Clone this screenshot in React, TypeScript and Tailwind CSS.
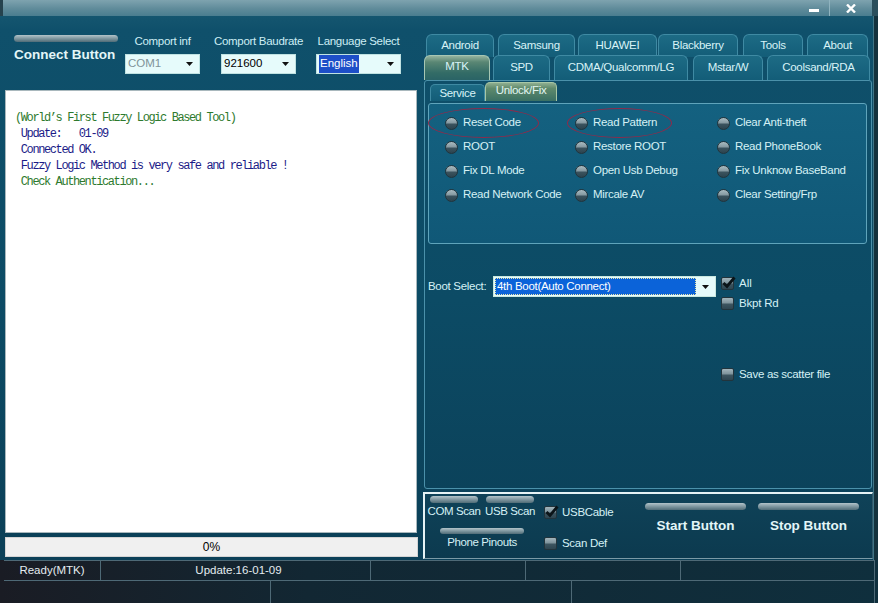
import React from 'react';

const sans = "font-['Liberation_Sans',Arial,sans-serif]";

function Pill({ className }: { className: string }) {
  return (
    <div
      className={`rounded-full bg-[linear-gradient(180deg,#b3c4ca_0%,#7f97a0_50%,#506c77_100%)] ${className}`}
    />
  );
}

function Arrow() {
  return (
    <svg width="7" height="4" viewBox="0 0 7 4">
      <path d="M0 0h7L3.5 4z" fill="#111" />
    </svg>
  );
}

function Radio() {
  return (
    <span className="inline-block w-[13px] h-[13px] shrink-0 rounded-full border border-[#22343c] bg-[linear-gradient(180deg,#a9bbc1_0%,#8599a1_45%,#3b535e_55%,#2c444f_100%)]" />
  );
}

function Check({ checked }: { checked?: boolean }) {
  return (
    <span className="relative inline-block w-[13px] h-[13px] shrink-0 rounded-[2px] border border-[#22343c] bg-[linear-gradient(180deg,#a3b5bc_0%,#7e939b_45%,#3d5560_55%,#2e4651_100%)]">
      {checked && (
        <svg className="absolute left-[0px] -top-[2px]" width="14" height="14" viewBox="0 0 14 14">
          <path d="M1.5 7 L5 10.5 L12.5 1.5" stroke="#0b1418" strokeWidth="2.8" fill="none" />
        </svg>
      )}
    </span>
  );
}

function TitleBar() {
  return (
    <div className="h-[16px] flex bg-[linear-gradient(180deg,#7ea3af_0%,#5f8b9a_55%,#4a7d8f_100%)]">
      <div className="w-[3px] bg-[#26434e]" />
      <div className="flex-1" />
      <div className="w-[30px] flex items-center justify-center">
        <div className="w-[10px] h-[3px] bg-white mt-[5px]" />
      </div>
      <div className="w-[1px] bg-[#8fb3bf]" />
      <div className="w-[42px] flex items-center justify-center">
        <svg width="10" height="9" viewBox="0 0 10 9">
          <path d="M1 0.5 L9 8.5 M9 0.5 L1 8.5" stroke="#fff" strokeWidth="2.4" />
        </svg>
      </div>
      <div className="w-[6px] bg-[#2b4f5c]" />
    </div>
  );
}

function ComboGroup({
  label,
  className,
  children,
}: {
  label: string;
  className: string;
  children: React.ReactNode;
}) {
  return (
    <div className={`flex flex-col items-center pt-[18px] ${className}`}>
      <div className="h-[14px] leading-[14px] text-[11.5px] tracking-[-0.3px] text-[#cdeef4] whitespace-nowrap">
        {label}
      </div>
      <div className="mt-[6px] w-full h-[20px] bg-[#e6fbfb] border border-[#bfe2e2] flex items-center pl-[2px] pr-[6px] text-[11.5px]">
        <div className="flex-1 flex">{children}</div>
        <Arrow />
      </div>
    </div>
  );
}

function LeftPanel() {
  return (
    <div className="w-[420px] flex flex-col">
      <div className="h-[74px] flex items-start">
        <div className="ml-[14px] w-[104px] flex flex-col items-start">
          <Pill className="mt-[19px] w-[104px] h-[7px]" />
          <div className="mt-[5px] h-[16px] leading-[16px] text-[13.5px] font-bold text-[#e3f6f8] whitespace-nowrap">
            Connect Button
          </div>
        </div>
        <ComboGroup label="Comport inf" className="ml-[7px] w-[75px]">
          <span className="text-[#7f9399]">COM1</span>
        </ComboGroup>
        <ComboGroup label="Comport Baudrate" className="ml-[21px] w-[75px]">
          <span className="text-black">921600</span>
        </ComboGroup>
        <ComboGroup label="Language Select" className="ml-[20px] w-[85px]">
          <span className="bg-[#1d4fc8] text-white px-[1px]">English</span>
        </ComboGroup>
      </div>
      <div className="ml-[5px] w-[412px] h-[443px] bg-white border border-[#a9b8bd] pt-[19px] pl-[9px] font-['Liberation_Mono',monospace] text-[12px] tracking-[-1.4px] leading-[16px] whitespace-pre">
        <div className="text-[#2e7a2e]">(World’s First Fuzzy Logic Based Tool)</div>
        <div className="text-[#1c1c88]"> Update:   01-09</div>
        <div className="text-[#1c1c88]"> Connected OK.</div>
        <div className="text-[#1c1c88]"> Fuzzy Logic Method is very safe and reliable !</div>
        <div className="text-[#2e7a2e]"> Check Authentication...</div>
      </div>
      <div className="ml-[5px] mt-[4px] w-[413px] h-[20px] bg-[#f0f0f0] border border-[#d4d4d4] flex items-center justify-center text-[12px] text-black">
        0%
      </div>
    </div>
  );
}

const row1 = [
  { label: 'Android', cls: 'ml-[6px] w-[68px]' },
  { label: 'Samsung', cls: 'ml-[4px] w-[77px]' },
  { label: 'HUAWEI', cls: 'ml-[3px] w-[79px]' },
  { label: 'Blackberry', cls: 'ml-[1px] w-[80px]' },
  { label: 'Tools', cls: 'ml-[5px] w-[60px]' },
  { label: 'About', cls: 'ml-[4px] w-[61px]' },
];

const row2 = [
  { label: 'MTK', cls: 'ml-[4px] w-[66px]', active: true },
  { label: 'SPD', cls: 'ml-[3px] w-[57px]' },
  { label: 'CDMA/Qualcomm/LG', cls: 'ml-[4px] w-[134px]' },
  { label: 'Mstar/W', cls: 'ml-[5px] w-[70px]' },
  { label: 'Coolsand/RDA', cls: 'ml-[4px] w-[103px]' },
];

function Tab({ label, cls, active }: { label: string; cls: string; active?: boolean }) {
  const base =
    'h-full rounded-t-[6px] border border-b-0 flex items-center justify-center text-[11.5px] tracking-[-0.3px] text-[#d8f3f7] whitespace-nowrap';
  const look = active
    ? 'border-[#a7c7b4] bg-[linear-gradient(180deg,#93b39f_0%,#5a8774_25%,#336c66_70%,#2a6366_100%)] pb-[3px]'
    : 'border-[#3f8aa3] bg-[linear-gradient(180deg,#1d6b85_0%,#135d78_100%)]';
  return <div className={`${base} ${look} ${cls}`}>{label}</div>;
}

const radios = [
  ['Reset Code', 'Read Pattern', 'Clear Anti-theft'],
  ['ROOT', 'Restore ROOT', 'Read PhoneBook'],
  ['Fix DL Mode', 'Open Usb Debug', 'Fix Unknow BaseBand'],
  ['Read Network Code', 'Mircale AV', 'Clear Setting/Frp'],
];

function RadioItem({ label, cls }: { label: string; cls: string }) {
  return (
    <div className={`h-[24px] flex items-center gap-[5px] ${cls}`}>
      <Radio />
      <span className="text-[11.5px] tracking-[-0.3px] text-[#d5f1f5] whitespace-nowrap">{label}</span>
    </div>
  );
}

function TabBody() {
  return (
    <div className="ml-[4px] w-[448px] h-[409px] border border-[#4b91aa] rounded-[3px] flex flex-col">
      <div className="h-[20px] flex items-end pl-[5px]">
        <div className="w-[55px] h-[17px] rounded-t-[5px] border border-b-0 border-[#3f8aa3] bg-[linear-gradient(180deg,#1d6b85_0%,#135d78_100%)] flex items-center justify-center text-[11.5px] tracking-[-0.3px] text-[#d8f3f7] pt-[2px]">
          Service
        </div>
        <div className="w-[72px] h-[19px] rounded-t-[5px] border border-b-0 border-[#a7c7a6] bg-[linear-gradient(180deg,#8fae90_0%,#5f8a6c_30%,#3a7064_100%)] flex items-center justify-center text-[11.5px] tracking-[-0.3px] text-[#e2f6f3] pb-[2px]">
          Unlock/Fix
        </div>
      </div>
      <div className="relative ml-[3px] mt-[2px] w-[439px] h-[141px] border border-[#5fa4bb] rounded-[3px] bg-[linear-gradient(180deg,#146180_0%,#105877_100%)] pt-[7px] pl-[16px]">
        {radios.map((r) => (
          <div key={r[0]} className="flex">
            <RadioItem label={r[0]} cls="w-[130px]" />
            <RadioItem label={r[1]} cls="w-[142px]" />
            <RadioItem label={r[2]} cls="" />
          </div>
        ))}
        <div className="absolute -left-[1px] top-[4px] w-[111px] h-[30px] rounded-[50%] border border-[#8e2b4b]" />
        <div className="absolute left-[138px] top-[4px] w-[105px] h-[30px] rounded-[50%] border border-[#8e2b4b]" />
      </div>
      <div className="mt-[32px] flex items-start pl-[3px]">
        <div className="w-[65px] h-[21px] leading-[21px] text-[11.5px] tracking-[-0.3px] text-[#d5f1f5] whitespace-nowrap">
          Boot Select:
        </div>
        <div className="w-[223px] h-[21px] bg-[#e6fbfb] border border-[#c9e8e0] flex items-center p-[1px]">
          <div className="w-[201px] h-full bg-[#0b63d9] border border-dotted border-[#e9e7a8] text-white text-[11.5px] tracking-[-0.3px] leading-[15px] pl-[1px] whitespace-nowrap">
            4th Boot(Auto Connect)
          </div>
          <div className="flex-1 flex items-center justify-center">
            <Arrow />
          </div>
        </div>
        <div className="ml-[5px] flex flex-col">
          <div className="mt-[1px] flex items-center gap-[5px] h-[13px]">
            <Check checked />
            <span className="text-[11.5px] text-[#d5f1f5]">All</span>
          </div>
          <div className="mt-[7px] flex items-center gap-[5px] h-[13px]">
            <Check />
            <span className="text-[11.5px] tracking-[-0.2px] text-[#d5f1f5]">Bkpt Rd</span>
          </div>
          <div className="mt-[58px] flex items-center gap-[5px] h-[13px]">
            <Check />
            <span className="text-[11.5px] tracking-[-0.3px] text-[#d5f1f5] whitespace-nowrap">Save as scatter file</span>
          </div>
        </div>
      </div>
    </div>
  );
}

function BottomPanel() {
  const lbl = 'h-[16px] leading-[16px] text-[11.5px] tracking-[-0.4px] text-[#d5f1f5] whitespace-nowrap';
  return (
    <div className="mt-[3px] ml-[3px] w-[450px] h-[67px] border-t-2 border-l-2 border-[#e6f3f5] border-r border-b border-r-[#31586a] border-b-[#7b9aa6] bg-[linear-gradient(180deg,#0f4258_0%,#0c3a4f_100%)] flex">
      <div className="ml-[3px] flex flex-col">
        <div className="flex">
          <div className="w-[52px] flex flex-col items-center">
            <Pill className="mt-[2px] w-[48px] h-[7px]" />
            <div className={lbl}>COM Scan</div>
          </div>
          <div className="ml-[5px] w-[50px] flex flex-col items-center">
            <Pill className="mt-[2px] w-[48px] h-[7px]" />
            <div className={lbl}>USB Scan</div>
          </div>
        </div>
        <div className="ml-[12px] w-[84px] flex flex-col items-center">
          <Pill className="mt-[9px] w-[84px] h-[6px]" />
          <div className={lbl}>Phone Pinouts</div>
        </div>
      </div>
      <div className="ml-[9px] w-[101px] flex flex-col">
        <div className="mt-[12px] h-[13px] flex items-center gap-[5px]">
          <Check checked />
          <span className="text-[11.5px] tracking-[-0.3px] text-[#d5f1f5]">USBCable</span>
        </div>
        <div className="mt-[18px] h-[13px] flex items-center gap-[5px]">
          <Check />
          <span className="text-[11.5px] tracking-[-0.3px] text-[#d5f1f5]">Scan Def</span>
        </div>
      </div>
      <div className="w-[101px] flex flex-col items-center">
        <Pill className="mt-[9px] w-[101px] h-[7px]" />
        <div className="mt-[8px] h-[16px] leading-[16px] text-[13.5px] font-bold text-[#e3f6f8] whitespace-nowrap">
          Start Button
        </div>
      </div>
      <div className="ml-[12px] w-[101px] flex flex-col items-center">
        <Pill className="mt-[9px] w-[101px] h-[7px]" />
        <div className="mt-[8px] h-[16px] leading-[16px] text-[13.5px] font-bold text-[#e3f6f8] whitespace-nowrap">
          Stop Button
        </div>
      </div>
    </div>
  );
}

function RightPanel() {
  return (
    <div className="w-[453px] flex flex-col">
      <div className="mt-[18px] h-[23px] flex">
        {row1.map((t) => (
          <Tab key={t.label} label={t.label} cls={t.cls} />
        ))}
      </div>
      <div className="-mt-[2px] h-[25px] flex relative z-10">
        {row2.map((t) => (
          <Tab key={t.label} label={t.label} cls={t.cls} active={t.active} />
        ))}
      </div>
      <TabBody />
      <BottomPanel />
    </div>
  );
}

function StatusBar() {
  const txt = 'text-[11.5px] text-[#e4ecf0] whitespace-nowrap';
  return (
    <div className={`h-[43px] flex flex-col bg-[linear-gradient(90deg,#1a1c24_0%,#122733_35%,#0f2f3d_100%)]`}>
      <div className="ml-[4px] mr-[3px] h-[20px] flex border-t border-[#4e6976]">
        <div className={`w-[96px] flex items-center justify-center ${txt}`}>Ready(MTK)</div>
        <div className={`w-[270px] border-l border-[#4e6976] flex items-center justify-center pl-[6px] ${txt}`}>
          Update:16-01-09
        </div>
        <div className="w-[155px] border-l border-[#4e6976]" />
        <div className="w-[155px] border-l border-[#4e6976]" />
        <div className="flex-1 border-l border-r border-[#4e6976]" />
      </div>
      <div className="ml-[4px] mr-[3px] flex-1 flex border-t border-[#4e6976]">
        <div className="w-[266px]" />
        <div className="w-[301px] border-l border-[#4e6976]" />
        <div className="flex-1 border-l border-r border-[#4e6976]" />
      </div>
    </div>
  );
}

export default function App() {
  return (
    <div
      className={`w-[878px] h-[603px] overflow-hidden flex flex-col ${sans} bg-[linear-gradient(180deg,#1b5c74_0px,#0f506b_30px,#0c4b65_300px,#0b4058_540px)]`}
    >
      <TitleBar />
      <div className="flex h-[544px]">
        <LeftPanel />
        <RightPanel />
        <div className="w-[5px] border-l border-[#3f7484] bg-[#14323d]" />
      </div>
      <StatusBar />
    </div>
  );
}
